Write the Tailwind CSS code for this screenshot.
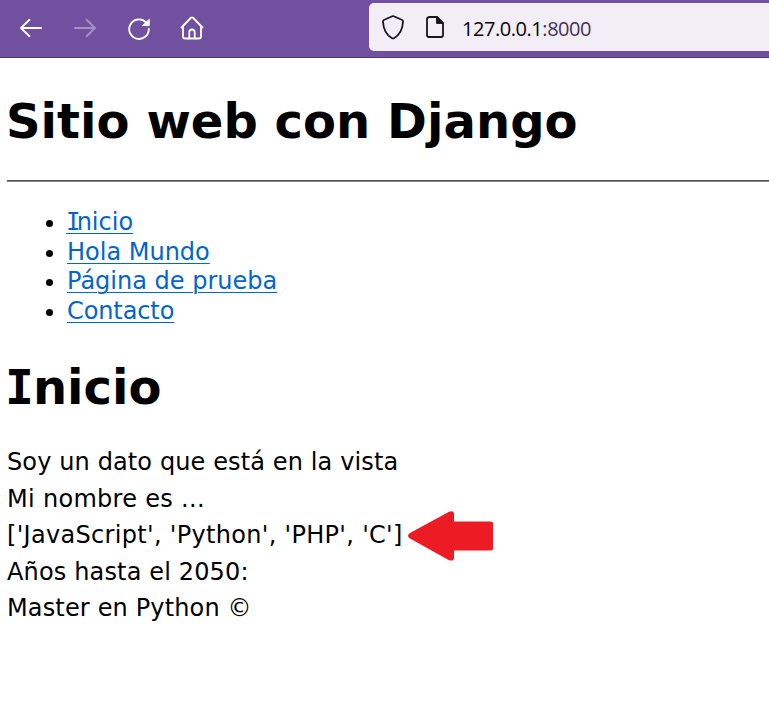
<!DOCTYPE html>
<html lang="es"><head><meta charset="utf-8"><title>Sitio web con Django</title>
<script src="https://cdn.jsdelivr.net/npm/@tailwindcss/browser@4"></script></head>
<body class="w-[769px] h-[702px] overflow-hidden bg-white text-black font-['DejaVu_Sans',sans-serif]">
<header class="flex h-[58px] bg-[#7250a0] border-b border-[#563579]">
<nav class="flex w-[369px] pl-[18px] pt-[15px] gap-[28px] text-white">
<svg class="w-[26px] h-[26px]" viewBox="0 0 26 26" fill="none" stroke="currentColor" stroke-width="1.9" stroke-linecap="round" stroke-linejoin="round"><path d="M23 13H3M11.500 4.800 3 13l8.500 8.200"/></svg>
<svg class="w-[26px] h-[26px] text-[#a58fc3]" viewBox="0 0 26 26" fill="none" stroke="currentColor" stroke-width="1.9" stroke-linecap="round" stroke-linejoin="round"><path d="M3 13h20M14.500 4.800 23 13l-8.500 8.200"/></svg>
<svg class="w-[26px] h-[26px]" viewBox="0 0 26 26" fill="none" stroke="currentColor" stroke-width="1.900" stroke-linecap="round" stroke-linejoin="round"><path d="M22.800 14A9.800 9.800 0 1 1 20 7.300"/><path fill="currentColor" stroke-width=".8" d="M23.300 4.600v6h-6.600Z"/></svg>
<svg class="-ml-px w-[26px] h-[26px]" viewBox="0 0 26 26" fill="none" stroke="currentColor" stroke-width="1.800" stroke-linecap="round" stroke-linejoin="round"><path d="M2.500 12.500 11.700 3q1.300-1.300 2.600 0l9.200 9.500M4 11.500v10q0 2 2 2h14q2 0 2-2v-10M10.300 23.200v-6q0-2.700 2.700-2.700t2.700 2.700v6"/></svg>
</nav>
<div class="flex flex-1 items-center h-[48px] mt-[3px] rounded-l-[5px] bg-[#f3eef6] pl-[12px]">
<svg class="w-[24px] h-[26px]" viewBox="0 0 24 26" fill="none" stroke="#18151b" stroke-width="1.800" stroke-linejoin="round"><path d="M11.200 2.300Q12 1.900 12.800 2.300L21.200 6Q22.100 6.400 22 7.500C21.700 15 18.500 21 13 24.200Q12 24.700 11 24.200C5.500 21 2.300 15 2 7.500Q1.900 6.400 2.800 6Z"/></svg>
<svg class="ml-[20px] w-[20px] h-[24px]" viewBox="0 0 20 24" fill="none" stroke="#18151b" stroke-width="1.800" stroke-linejoin="round"><path d="M4.500 2H12l6 6v12q0 2-2 2H4q-2 0-2-2V4.500Q2 2 4.500 2"/><path fill="#18151b" stroke-width="1" d="M11.600 2 18.400 8.400h-6.800Z"/></svg>
<span class="ml-[17px] mt-[4px] text-[20px] leading-[28px] tracking-[-0.45px] text-[#453058] font-['Open_Sans',sans-serif]"><span class="text-[#050308]">127.0.0.1</span>:8000</span>
</div>
</header>
<main class="pl-[7px] text-[24px] leading-[30px]">
<h1 class="-ml-px pt-[33px] text-[48px] leading-[60px] tracking-[0.05px] font-bold">Sitio web con Django</h1>
<hr class="mt-[29px] h-[2px] border-0 border-t border-[#505050] bg-[#888]">
<ul class="mt-[26px] pl-[60px] list-disc leading-[29.67px] [&_a]:text-[#0066cc] [&_a]:underline [&_a]:decoration-1 [&_a]:underline-offset-[3px]"><li><a><span class="font-['DejaVu_Sans_Mono',monospace] tracking-[-3.8px] -ml-[1px]">I</span>nicio</a></li><li><a>Hola Mundo</a></li><li><a>Página de prueba</a></li><li><a class="tracking-[-0.1px]">Contacto</a></li></ul>
<h2 class="mt-[30px] text-[48px] leading-[60px] font-bold"><span class="font-['DejaVu_Sans_Mono',monospace] tracking-[-1px] -ml-[2px]">I</span>nicio</h2>
<div class="mt-[27px] leading-[36.5px]"><p class="tracking-[0.12px]">Soy un dato que está en la vista</p><p class="pt-px -mb-px tracking-[0.3px]">Mi nombre es ...</p>
<div class="flex"><p class="w-[401px] shrink-0 tracking-[0.31px]">['JavaScript', 'Python', 'PHP', 'C']</p><svg class="-mt-[6px] -mb-[8px] w-[86px] h-[50px]" viewBox="0 0 86 50" fill="#ed1c24"><path d="M0 25Q0 23 2 22L41 .8Q46-.7 46 3v7.500h37q2 0 2 2v25q0 2-2 2H46V47q0 3.500-5 2.200L2 27.500Q0 26 0 25Z"/></svg></div>
<p class="pt-px -mb-px tracking-[0.150px]">Años hasta el 2050:</p><p class="tracking-[0.150px]">Master en Python ©</p></div>
</main></body></html>
